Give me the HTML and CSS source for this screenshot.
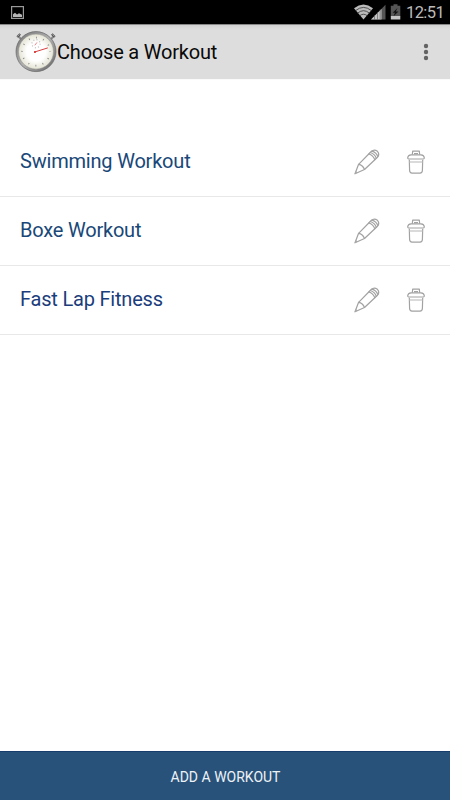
FILE: index.html
```html
<!DOCTYPE html>
<html lang="en">
<head>
<meta charset="utf-8">
<title>Choose a Workout</title>
<link rel="stylesheet" href="styles.css">
</head>
<body>
<svg class="defs" width="0" height="0" aria-hidden="true">
  <symbol id="pencil" viewBox="0 0 28 28">
    <g fill="none" stroke="#a2a2a2" stroke-width="1.2" stroke-linejoin="round" stroke-linecap="round">
      <path d="M2 25.8 L5.6 16.3 L18.2 3.5 Q21.2 .9 24.4 3.3 Q27 6 24.5 9.2 L11.5 21.5 Z"/>
      <path d="M5.6 16.3 Q9.8 16.8 11.5 21.5 M15.7 6 Q20.3 7.2 21.8 11.8 M17.2 4.5 Q21.8 5.8 23.3 10.3 M18.8 3.1 Q23.4 4.3 24.8 8.7"/>
    </g>
    <path d="M1.6 26.2 L2.9 22.9 L4.8 24.6 Z" fill="#aaa"/>
  </symbol>
  <symbol id="trash" viewBox="0 0 18 24">
    <g fill="none" stroke="#a2a2a2" stroke-width="1.2" stroke-linejoin="round">
      <path d="M2.3 9.8 L2.6 20.5 Q2.7 23 5 23.2 H13 Q15.3 23 15.4 20.5 L15.7 9.8"/>
      <path d="M2.4 12 H15.6" stroke="#c2c2c2"/>
      <path d="M1.6 9 Q.7 8.9 .7 7.8 Q.9 5.1 4 4.8 H14 Q17.1 5.1 17.3 7.8 Q17.3 8.9 16.4 9 Z"/>
      <path d="M5.3 4.7 L5.7 1.1 H12.3 L12.7 4.7 M7 3.6 H11"/>
    </g>
  </symbol>
</svg>
<div class="status-bar">
  <svg class="status-picture" width="13" height="13" viewBox="0 0 13 13">
    <rect x=".6" y=".6" width="11.8" height="11.8" fill="none" stroke="#999" stroke-width="1.2"/>
    <path d="M2 11 V8.3 L4 6.7 L6 8.5 L8 7.3 L11 8.8 V11 Z" fill="#b5b5b5"/>
  </svg>
  <div class="status-right">
    <svg width="48" height="16" viewBox="0 0 48 16">
      <path d="M0 4.2 Q9.5 -3 19 4.2 L9.5 15.6 Z" fill="#bbb"/>
      <path d="M1.6 6.6 Q9.5 .2 17.4 6.6 M3.5 9.2 Q9.5 4.2 15.5 9.2 M5.6 11.8 Q9.5 8.7 13.4 11.8" fill="none" stroke="#333" stroke-width=".8"/>
      <path d="M17 15.5 L31.5 .8 V15.5 Z" fill="#555"/>
      <path d="M17 15.5 L27.5 4.9 V15.5 Z" fill="#c4c4c4"/>
      <path d="M20.5 11 V15.5 M23.5 8 V15.5 M26.2 5.5 V15.5" stroke="#555" stroke-width=".6"/>
      <path d="M36.8 1.8 H39.5 V.3 H43.5 V1.8 H46.3 V12.5 H36.8 Z" fill="#555"/>
      <path d="M36.8 12 H46.3 V15.5 H36.8 Z" fill="#c4c4c4"/>
      <path d="M43.5 4 L38.7 8.7 H41 L39.5 12.2 L44.5 7.6 H41.8 Z" fill="#111"/>
    </svg>
    <span class="clock">12:51</span>
  </div>
</div>
<header class="app-bar">
  <svg class="stopwatch" width="42" height="43" viewBox="0 0 42 43">
    <defs>
      <radialGradient id="face"><stop offset=".5" stop-color="#fff"/><stop offset="1" stop-color="#e0dfcd"/></radialGradient>
      <linearGradient id="rim" x2="1" y2="1"><stop stop-color="#777"/><stop offset=".5" stop-color="#b0b0b0"/><stop offset="1" stop-color="#666"/></linearGradient>
    </defs>
    <path d="M3.5 6.5 L7 10 M38.5 6.5 L35 10" stroke="#888" stroke-width="2"/>
    <path d="M2.2 7 L5.2 4 M39.8 7 L36.8 4" stroke="#555" stroke-width="2.2"/>
    <path d="M2.5 6.3 L4.6 4.3 M39.5 6.3 L37.4 4.3" stroke="#bbb" stroke-width=".8"/>
    <circle cx="21" cy="21.6" r="18.8" fill="url(#face)" stroke="url(#rim)" stroke-width="2.4"/>
    <circle cx="21" cy="21.6" r="20" fill="none" stroke="#666" stroke-width=".7"/>
    <circle cx="21" cy="21.6" r="17.5" fill="none" stroke="#888" stroke-width=".5"/>
    <circle cx="21" cy="21.6" r="14" fill="none" stroke="#888" stroke-width="1.6" stroke-dasharray=".9 6.43" stroke-dashoffset=".45"/>
    <circle cx="21" cy="13.7" r="4.1" fill="none" stroke="#bbb" stroke-width="1.2" stroke-dasharray="1 2.22"/>
    <path d="M19.8 15.3 L22 12.4" stroke="#e88" stroke-width="1"/>
    <path d="M19 22.2 L32.8 17.9" stroke="#d94040" stroke-width="1"/>
    <circle cx="20" cy="21.9" r="1" fill="#d92a2a"/>
  </svg>
  <h1 class="title">Choose a Workout</h1>
  <svg class="overflow" width="6" height="18" viewBox="0 0 6 18" fill="#636363">
    <circle cx="3" cy="3" r="2.2"/><circle cx="3" cy="9" r="2.2"/><circle cx="3" cy="15" r="2.2"/>
  </svg>
</header>
<main class="workouts">
  <div class="row">
    <span class="name">Swimming Workout</span>
    <svg class="pencil"><use href="#pencil"/></svg>
    <svg class="trash"><use href="#trash"/></svg>
  </div>
  <div class="row">
    <span class="name">Boxe Workout</span>
    <svg class="pencil"><use href="#pencil"/></svg>
    <svg class="trash"><use href="#trash"/></svg>
  </div>
  <div class="row">
    <span class="name fitness">Fast Lap Fitness</span>
    <svg class="pencil"><use href="#pencil"/></svg>
    <svg class="trash"><use href="#trash"/></svg>
  </div>
</main>
<footer class="add-bar"><span>ADD A WORKOUT</span></footer>
</body>
</html>
```
FILE: styles.css
```css
* { box-sizing: border-box; }
body {
  margin: 0;
  width: 450px;
  height: 800px;
  display: flex;
  flex-direction: column;
  background: #fff;
  font-family: Roboto, "Liberation Sans", sans-serif;
  overflow: hidden;
}
svg { display: block; flex: none; }
.defs { display: none; }
.status-bar {
  height: 24px;
  flex: none;
  background: #000;
  display: flex;
  align-items: center;
  justify-content: space-between;
  padding: 0 6px 0 11px;
}
.status-right { display: flex; align-items: center; gap: 4px; }
.clock { width: 38px; color: #bbb; font-size: 16.5px; line-height: 22px; letter-spacing: -.6px; padding-top: 2px; }
.app-bar {
  height: 56px;
  flex: none;
  background: linear-gradient(#d2d2d2, #ddd 4px, #ddd 54px, #fafafa 54px);
  border-top: 1px solid #888;
  display: flex;
  align-items: center;
  padding: 0 21px 2px 15px;
}
.title { margin: 0; flex: 1; font-size: 20px; font-weight: 400; line-height: 24px; letter-spacing: -.2px; color: #090909; white-space: nowrap; }
.workouts { flex: 1; padding-top: 48px; }
.row {
  height: 69px;
  display: flex;
  align-items: center;
  padding: 0 25px 0 20px;
  border-bottom: 1px solid #e8e8e8;
}
.name { flex: 1; font-size: 20px; line-height: 24px; padding-bottom: 2px; color: #194878; letter-spacing: -.2px; }
.fitness { color: #1b3d7c; }
.pencil { width: 28px; height: 28px; margin-right: 26px; }
.trash { width: 18px; height: 24px; }
.add-bar {
  height: 49px;
  flex: none;
  background: #28527a;
  border-top: 1px solid #173d6c;
  display: flex;
  align-items: center;
  justify-content: center;
  color: #eef2f7;
  font-size: 14px;
  line-height: 20px;
  padding: 2px 0 0 1px;
}
```
